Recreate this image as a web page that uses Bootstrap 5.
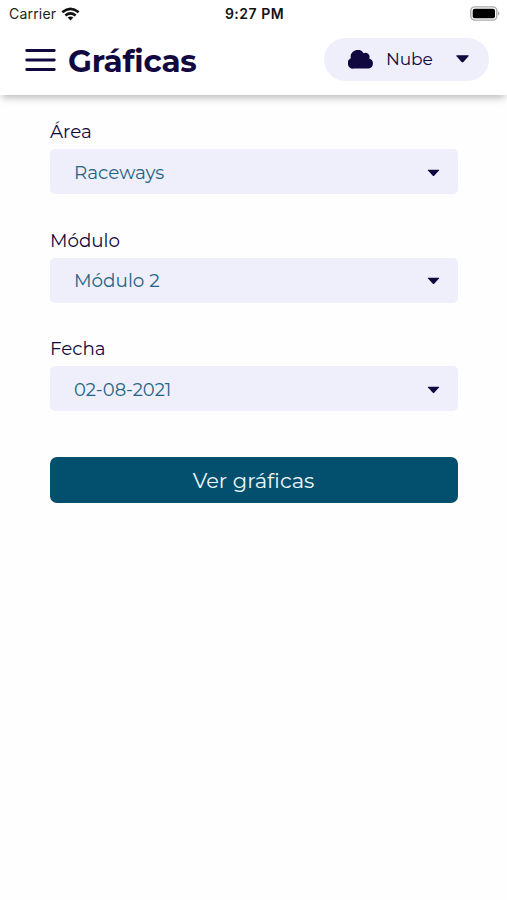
<!DOCTYPE html>
<html lang="es">
<head>
<meta charset="utf-8">
<meta name="viewport" content="width=device-width, initial-scale=1">
<title>Gráficas</title>
<link href="https://cdn.jsdelivr.net/npm/bootstrap@5.3.0/dist/css/bootstrap.min.css" rel="stylesheet">
<style>
body{font-family:Montserrat,Inter,sans-serif;color:#120840;background:#fefefe;min-height:900px}
.app-head{height:95px;background:#fff;box-shadow:0 5px 7px -2px rgba(0,0,0,.25)}
.status{height:27px;font-family:Inter,sans-serif;font-size:14px;line-height:26px;color:#222;padding:0 7px 0 9px}
.status > div{flex:1 1 0}
.carrier-name{letter-spacing:.2px}
.wifi{margin-left:5px}
.clock{font-weight:600;color:#111;letter-spacing:.5px}
.title-row{height:64px;padding:0 18px 0 25px}
.menu-icon{margin-top:1px}
.title-text{font-size:31px;font-weight:700;line-height:44px;letter-spacing:-.25px;margin-left:12px;padding-top:4px}
.cloud-pill{width:165px;height:43px;background:#efeefb;color:#120840;font-size:17px;padding:0 20px 0 24px;border:0}
.cloud-pill span{margin-left:12px;padding-top:2px;letter-spacing:-.1px}
.form-area{padding:23px 49px 0 50px}
.field{margin-bottom:32.7px}
.field label{font-size:18.3px;line-height:28px;height:31px;display:block}
.picker{height:45px;background:#efeefb;color:#1f6584;border-radius:5px;border:0;padding:2px 18px 0 24px;font-size:18.4px}
.picker.date{font-size:17.9px;padding-top:3px}
.go{height:46px;background:#02506d;color:#eef8fc;border-radius:7px;font-size:21px;line-height:46px;padding:1px 1px 0 0;margin-top:45.3px;border:0}
</style>
</head>
<body>
<header class="app-head position-relative">
  <div class="status d-flex align-items-center">
    <div class="d-flex align-items-center"><span class="carrier-name">Carrier</span>
      <svg class="wifi" width="19" height="14" viewBox="0 0 20 14" fill="none" stroke="#111" stroke-width="2.7"><path d="M1.4 5.1Q10-2 18.6 5.1M4.6 8.5q5.4-4.4 10.8 0"/><path d="M10 13.8 7 10.8q3-2.3 6 0z" fill="#111" stroke="none"/></svg>
    </div>
    <span class="clock">9:27 PM</span>
    <div class="d-flex justify-content-end">
      <svg width="30" height="15" viewBox="0 0 30 15"><rect x=".8" y=".9" width="26" height="13.2" rx="4" fill="#fff" stroke="#aaa" stroke-width="1.4"/><rect x="2.7" y="2.8" width="22.3" height="9.4" rx="2" fill="#000"/><path d="M28 5.5q3 2 0 4z" fill="#aaa"/></svg>
    </div>
  </div>
  <div class="title-row d-flex align-items-center">
    <svg class="menu-icon" width="31" height="24" viewBox="0 0 31 24" stroke="#120840" stroke-width="2.8" stroke-linecap="round"><path d="M1.7 2.5h27.6M1.7 12h27.6M1.7 21.5h27.6"/></svg>
    <h1 class="title-text mb-0"><span>Gráficas</span></h1>
    <button class="cloud-pill rounded-pill d-flex align-items-center ms-auto">
      <svg width="26" height="19" viewBox="0 0 26 19" fill="#120840"><path d="M5.7 18.6A5.5 5.5 0 0 1 2.8 8.2 7 7 0 0 1 15.6 3.2a4.1 4.1 0 0 1 5.6 5.3A5.2 5.2 0 0 1 20.7 18.6z"/></svg>
      <span>Nube</span>
      <svg class="ms-auto" width="13" height="8" viewBox="0 0 13 8" fill="#120840"><path d="M1 .2h11q1.3.1.5 1.1L7.4 7.1q-.9.9-1.8 0L.5 1.3Q-.3.3 1 .2z"/></svg>
    </button>
  </div>
</header>
<main class="form-area">
  <div class="field"><label>Área</label>
    <button class="picker w-100 d-flex align-items-center justify-content-between"><span>Raceways</span><svg width="13" height="8" viewBox="0 0 13 8" fill="#120840"><path d="M1.3.7h10.4q.9.1.3.8L7.2 6.8q-.7.6-1.4 0L1 1.5Q.4.8 1.3.7z"/></svg></button></div>
  <div class="field"><label>Módulo</label>
    <button class="picker w-100 d-flex align-items-center justify-content-between"><span>Módulo 2</span><svg width="13" height="8" viewBox="0 0 13 8" fill="#120840"><path d="M1.3.7h10.4q.9.1.3.8L7.2 6.8q-.7.6-1.4 0L1 1.5Q.4.8 1.3.7z"/></svg></button></div>
  <div class="field mb-0"><label>Fecha</label>
    <button class="picker date w-100 d-flex align-items-center justify-content-between"><span>02-08-2021</span><svg width="13" height="8" viewBox="0 0 13 8" fill="#120840"><path d="M1.3.7h10.4q.9.1.3.8L7.2 6.8q-.7.6-1.4 0L1 1.5Q.4.8 1.3.7z"/></svg></button></div>
  <button class="go btn w-100"><span>Ver gráficas</span></button>
</main>
<script src="https://cdn.jsdelivr.net/npm/bootstrap@5.3.0/dist/js/bootstrap.bundle.min.js"></script>
</body>
</html>
